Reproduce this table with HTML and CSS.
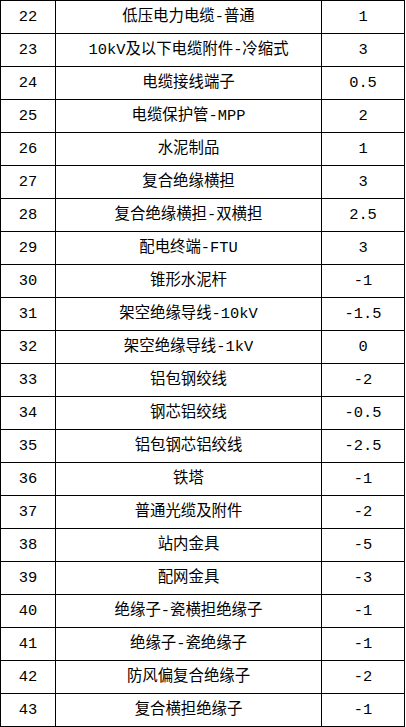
FILE: index.html
```html
<!DOCTYPE html>
<html lang="zh">
<head>
<meta charset="utf-8">
<link rel="stylesheet" href="styles.css">
</head>
<body>
<div class="sheet">
  <div class="cell">22</div><div class="cell">低压电力电缆-普通</div><div class="cell">1</div>
  <div class="cell">23</div><div class="cell">10kV及以下电缆附件-冷缩式</div><div class="cell">3</div>
  <div class="cell">24</div><div class="cell">电缆接线端子</div><div class="cell">0.5</div>
  <div class="cell">25</div><div class="cell">电缆保护管-MPP</div><div class="cell">2</div>
  <div class="cell">26</div><div class="cell">水泥制品</div><div class="cell">1</div>
  <div class="cell">27</div><div class="cell">复合绝缘横担</div><div class="cell">3</div>
  <div class="cell">28</div><div class="cell">复合绝缘横担-双横担</div><div class="cell">2.5</div>
  <div class="cell">29</div><div class="cell">配电终端-FTU</div><div class="cell">3</div>
  <div class="cell">30</div><div class="cell">锥形水泥杆</div><div class="cell">-1</div>
  <div class="cell">31</div><div class="cell">架空绝缘导线-10kV</div><div class="cell">-1.5</div>
  <div class="cell">32</div><div class="cell">架空绝缘导线-1kV</div><div class="cell">0</div>
  <div class="cell">33</div><div class="cell">铝包钢绞线</div><div class="cell">-2</div>
  <div class="cell">34</div><div class="cell">钢芯铝绞线</div><div class="cell">-0.5</div>
  <div class="cell">35</div><div class="cell">铝包钢芯铝绞线</div><div class="cell">-2.5</div>
  <div class="cell">36</div><div class="cell">铁塔</div><div class="cell">-1</div>
  <div class="cell">37</div><div class="cell">普通光缆及附件</div><div class="cell">-2</div>
  <div class="cell">38</div><div class="cell">站内金具</div><div class="cell">-5</div>
  <div class="cell">39</div><div class="cell">配网金具</div><div class="cell">-3</div>
  <div class="cell">40</div><div class="cell">绝缘子-瓷横担绝缘子</div><div class="cell">-1</div>
  <div class="cell">41</div><div class="cell">绝缘子-瓷绝缘子</div><div class="cell">-1</div>
  <div class="cell">42</div><div class="cell">防风偏复合绝缘子</div><div class="cell">-2</div>
  <div class="cell">43</div><div class="cell">复合横担绝缘子</div><div class="cell">-1</div>
</div>
</body>
</html>
```
FILE: styles.css
```css
html, body {
  margin: 0;
  padding: 0;
  background: #ffffff;
}

.sheet {
  display: grid;
  grid-template-columns: 55px 266px 83px;
  grid-auto-rows: 33px;
  width: 405px;
  box-sizing: border-box;
  border-left: 1px solid #000;
  border-top: 1px solid #000;
  font-family: "Liberation Mono", "Noto Sans CJK SC", monospace;
  font-size: 15.4px;
  color: #000;
}

.cell {
  box-sizing: border-box;
  border-right: 1px solid #000;
  border-bottom: 1px solid #000;
  display: flex;
  align-items: center;
  justify-content: center;
  padding-top: 1px;
  white-space: nowrap;
  line-height: 1;
}
```
